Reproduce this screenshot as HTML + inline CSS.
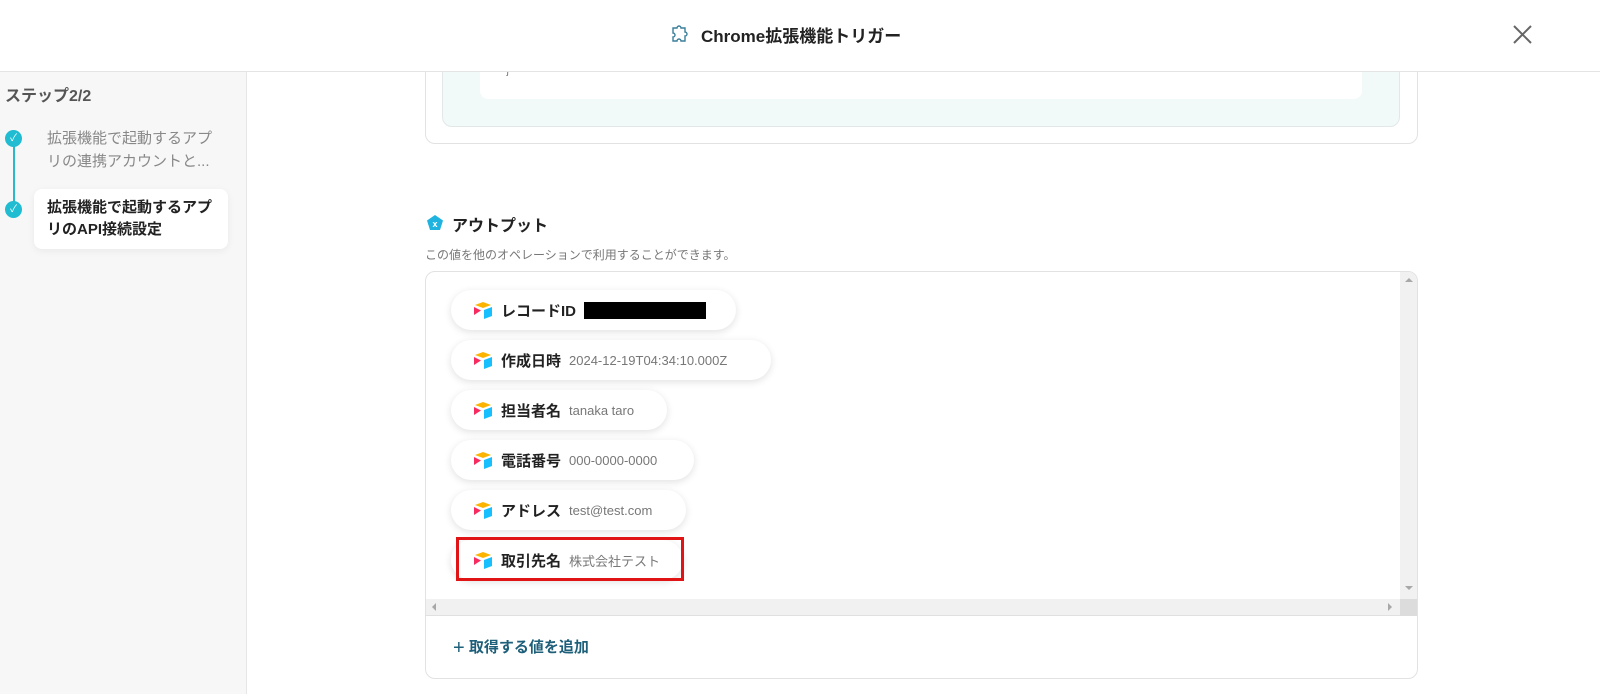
<!DOCTYPE html>
<html><head><meta charset="utf-8"><style>
*{box-sizing:border-box;margin:0;padding:0}
body{width:1600px;height:694px;overflow:hidden;background:#fff;font-family:"Liberation Sans","Noto Sans CJK JP",sans-serif;position:relative;color:#222}
.hdr{position:absolute;left:0;top:0;width:1600px;height:72px;background:#fff;border-bottom:1px solid #e4e4e4;z-index:2}
.title{position:absolute;left:669px;top:22px;font-size:17px;font-weight:bold;color:#222;display:flex;align-items:center;gap:8px}
.side{position:absolute;left:0;top:72px;width:247px;height:622px;background:#f7f7f7;border-right:1px solid #e6e6e6}
.abs{position:absolute}
.pill{position:absolute;left:451px;height:40px;border-radius:20px;background:#fff;box-shadow:0 2px 8px rgba(0,0,0,.12);display:flex;align-items:center;padding-left:22px;font-size:15px;font-weight:bold;color:#222;white-space:nowrap}
.pill svg{margin-right:8px}
.pill span{font-weight:normal;color:#777;font-size:13px;margin-left:8px}
</style></head><body>
<div class="hdr">
<div class="title"><svg width="24" height="24" viewBox="0 0 24 24" fill="none" stroke="#3a7f9a" stroke-width="1.4"><path d="M4 5h4a2 2 0 1 1 4 0h4v4a2 2 0 1 1 0 4v5h-4a2 2 0 1 0-4 0H4v-4a2 2 0 1 0 0-4z"/></svg>Chrome拡張機能トリガー</div>
<svg class="abs" style="left:1513px;top:25px" width="19" height="19" viewBox="0 0 19 19" stroke="#666" stroke-width="2"><path d="M1 1L18 18M18 1L1 18"/></svg>
</div>
<div class="side">
<div class="abs" style="left:5px;top:10px;font-size:16px;font-weight:bold;color:#555">ステップ2/2</div>
<div class="abs" style="left:13px;top:66px;width:2px;height:70px;background:#2ab9c9"></div>
<div class="abs" style="left:5px;top:58px;width:17px;height:17px;border-radius:50%;background:#1fbcd2;color:#fff;font-size:10px;text-align:center;line-height:17px">✓</div>
<div class="abs" style="left:5px;top:129px;width:17px;height:17px;border-radius:50%;background:#1fbcd2;color:#fff;font-size:10px;text-align:center;line-height:17px">✓</div>
<div class="abs" style="left:47px;top:55px;font-size:15px;line-height:23px;color:#888;width:170px">拡張機能で起動するアプリの連携アカウントと...</div>
<div class="abs" style="left:34px;top:117px;width:194px;height:60px;background:#fff;border-radius:8px;box-shadow:0 2px 8px rgba(0,0,0,.06)"></div>
<div class="abs" style="left:47px;top:125px;font-size:15px;line-height:22px;color:#222;font-weight:bold;width:170px">拡張機能で起動するアプリのAPI接続設定</div>
</div>
<div class="abs" style="left:425px;top:40px;width:993px;height:104px;border:1px solid #e2e2e2;border-radius:10px"></div>
<div class="abs" style="left:442px;top:40px;width:958px;height:87px;border:1px solid #e2e8e8;border-radius:10px;background:#f1f9f9"></div>
<div class="abs" style="left:480px;top:40px;width:882px;height:59px;border-radius:8px;background:#fff"></div>
<div class="abs" style="left:506px;top:66px;font-size:10px;color:#666">}</div>
<svg class="abs" style="left:426px;top:214px" width="18" height="18" viewBox="0 0 18 18"><path d="M9 1L17 6.5 14 16H4L1 6.5z" fill="#1fb3e0"/><text x="9" y="13" font-size="9" fill="#fff" text-anchor="middle" font-family="Liberation Sans" font-weight="bold">x</text></svg>
<div class="abs" style="left:452px;top:212px;font-size:16px;font-weight:bold;color:#222">アウトプット</div>
<div class="abs" style="left:425px;top:246px;font-size:12px;color:#777">この値を他のオペレーションで利用することができます。</div>
<div class="abs" style="left:425px;top:271px;width:993px;height:408px;border:1px solid #e2e2e2;border-radius:10px;overflow:hidden">
<div class="abs" style="right:0;top:0;width:17px;height:327px;background:#f1f1f1"></div>
<div class="abs" style="left:0;top:327px;width:992px;height:17px;background:#f1f1f1;border-bottom:1px solid #e0e0e0"></div>
<div class="abs" style="right:0;top:327px;width:17px;height:17px;background:#dcdcdc"></div>
<div class="abs" style="right:4px;top:6px;width:0;height:0;border:4px solid transparent;border-bottom-color:#a8a8a8;border-top:0"></div>
<div class="abs" style="right:4px;top:314px;width:0;height:0;border:4px solid transparent;border-top-color:#a8a8a8;border-bottom:0"></div>
<div class="abs" style="left:6px;top:331px;width:0;height:0;border:4px solid transparent;border-right-color:#a8a8a8;border-left:0"></div>
<div class="abs" style="right:25px;top:331px;width:0;height:0;border:4px solid transparent;border-left-color:#a8a8a8;border-right:0"></div>
</div>
<svg width="0" height="0" style="position:absolute"><defs><g id="at"><path d="M10 1L18 4 10 7 2 4z" fill="#fcb400"/><path d="M11 9L19 6V15L11 18z" fill="#18bfff"/><path d="M1 6L8 9.5 1 14z" fill="#f82b60"/></g></defs></svg>
<div class="pill" style="top:290px;width:285px"><svg width="20" height="19"><use href="#at"/></svg>レコードID<div style="width:122px;height:17px;background:#000;margin-left:8px"></div></div>
<div class="pill" style="top:340px;width:320px"><svg width="20" height="19"><use href="#at"/></svg>作成日時<span>2024-12-19T04:34:10.000Z</span></div>
<div class="pill" style="top:390px;width:216px"><svg width="20" height="19"><use href="#at"/></svg>担当者名<span>tanaka taro</span></div>
<div class="pill" style="top:440px;width:243px"><svg width="20" height="19"><use href="#at"/></svg>電話番号<span>000-0000-0000</span></div>
<div class="pill" style="top:490px;width:235px"><svg width="20" height="19"><use href="#at"/></svg>アドレス<span>test@test.com</span></div>
<div class="pill" style="top:540px;width:232px"><svg width="20" height="19"><use href="#at"/></svg>取引先名<span>株式会社テスト</span></div>
<div class="abs" style="left:456px;top:537px;width:228px;height:44px;border:3px solid #e01414"></div>
<div class="abs" style="left:453px;top:636px;font-size:15px;font-weight:bold;color:#1e5f7a"><span style="font-size:20px;font-weight:normal;vertical-align:-2px">+</span> 取得する値を追加</div>
</body></html>
